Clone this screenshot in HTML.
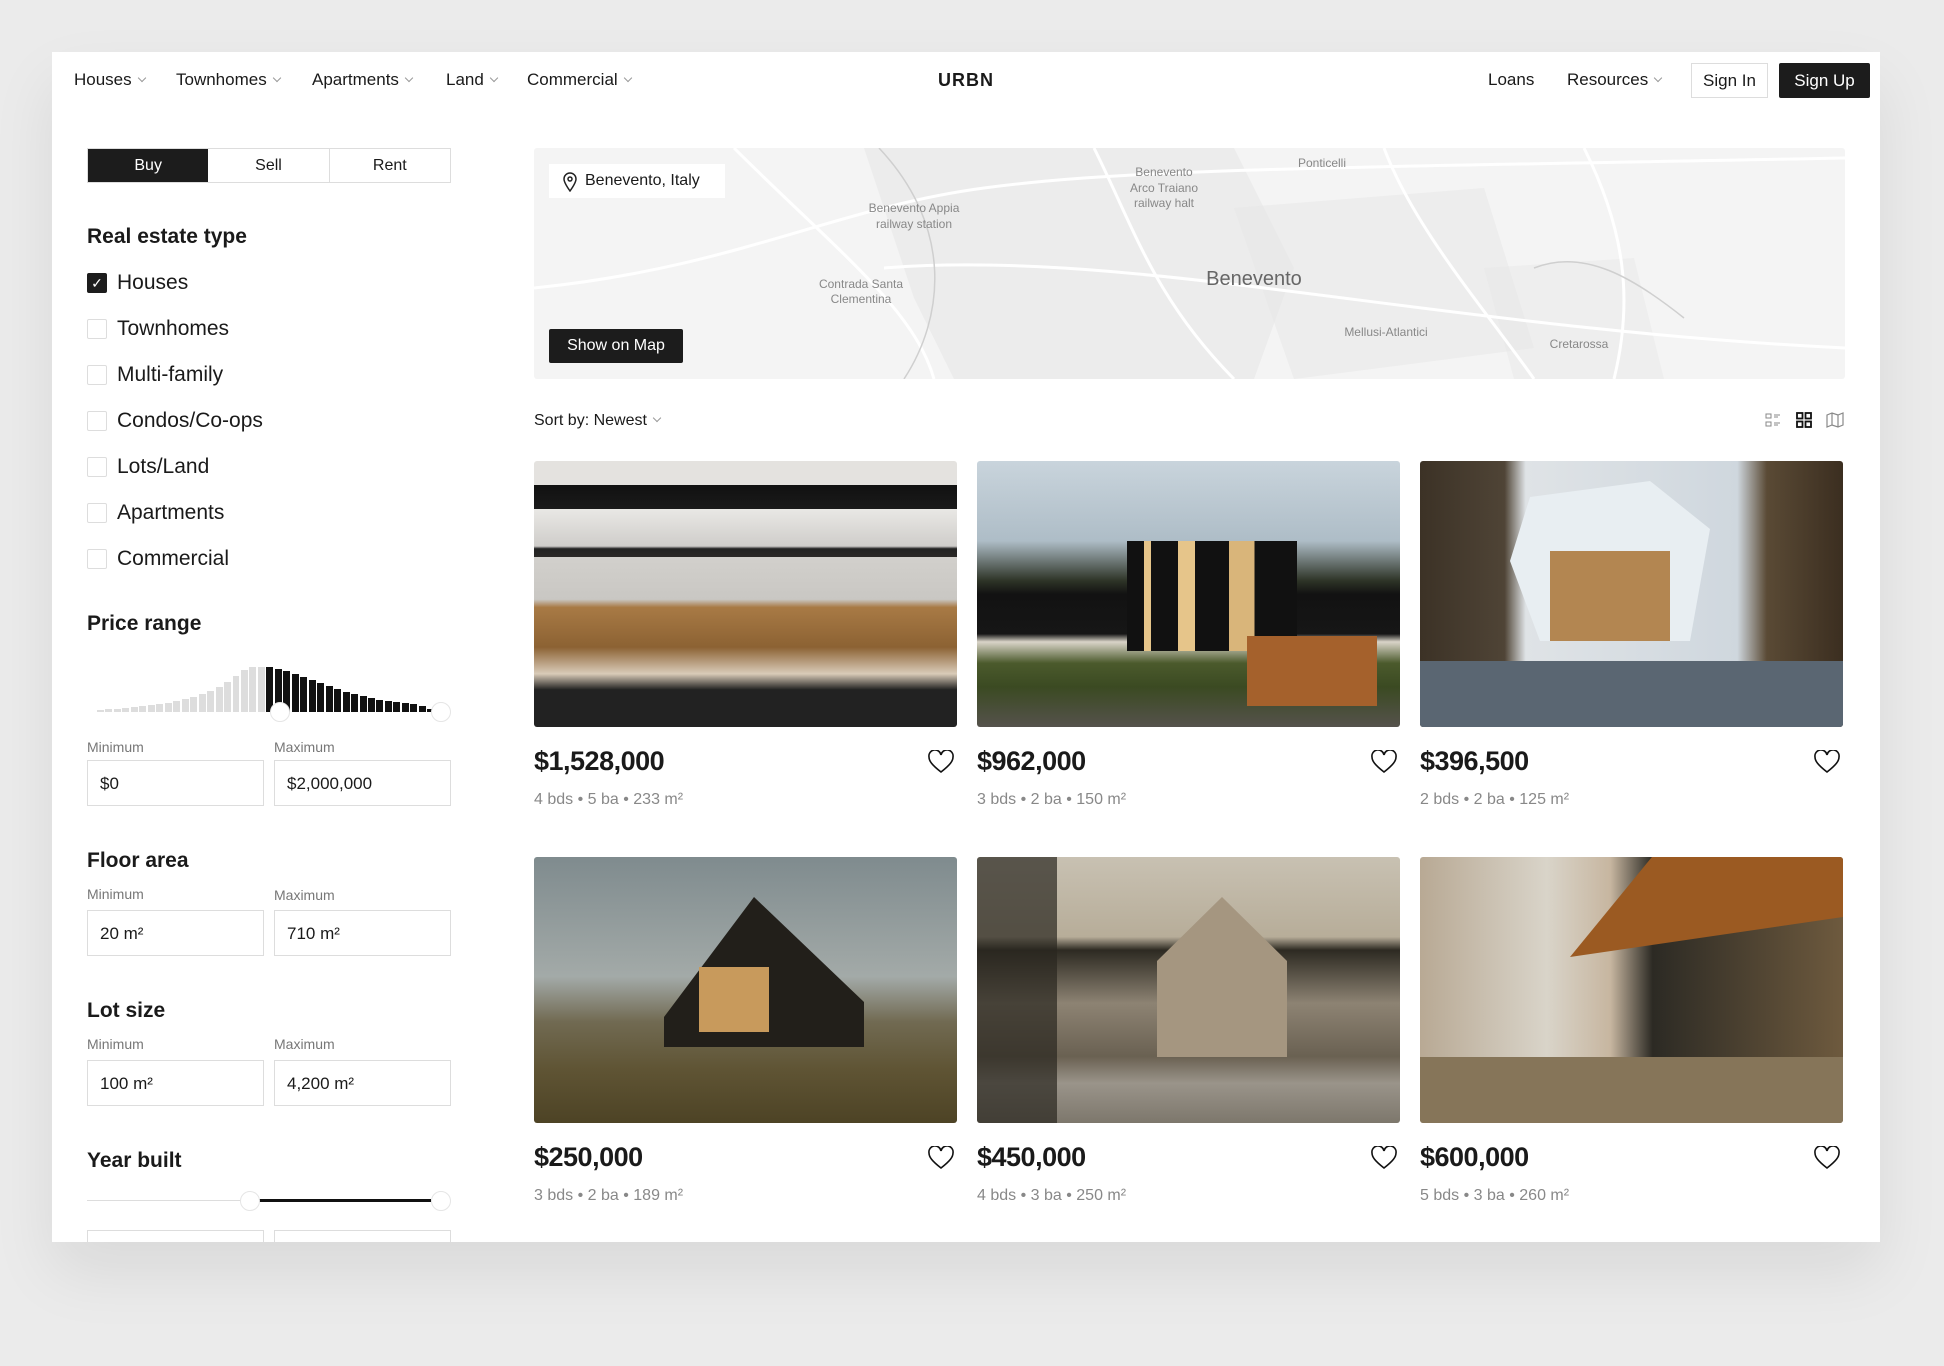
<!DOCTYPE html>
<html><head><meta charset="utf-8"><style>
*{box-sizing:border-box;margin:0;padding:0}
body{width:1944px;height:1366px;background:#ebebeb;font-family:"Liberation Sans",sans-serif;color:#1a1a1a;position:relative;overflow:hidden}
.card{position:absolute;left:52px;top:52px;width:1828px;height:1190px;background:#fff;box-shadow:0 30px 60px rgba(0,0,0,.08);overflow:hidden}
.a{position:absolute;white-space:nowrap}
.nav{font-size:17px;top:18px}
.chev{display:inline-block;width:6px;height:6px;border-right:1px solid #999;border-bottom:1px solid #999;transform:rotate(45deg);margin-left:7px;position:relative;top:-4px}
.h{font-size:21px;font-weight:bold}
.cb{position:absolute;left:87px;width:20px;height:20px;border:1px solid #ddd;border-radius:2px}
.cl{font-size:21px;left:117px}
.lab{font-size:14px;color:#777}
.inp{position:absolute;height:46px;border:1px solid #ddd;font-size:17px;padding:13px 12px;width:177px}
.img{position:absolute;width:423px;height:266px;border-radius:3px;overflow:hidden}
.price{font-size:27px;font-weight:bold;letter-spacing:-.5px}
.det{font-size:16px;color:#888}
.heart{position:absolute;width:26px;height:24px}
</style></head><body>
<div class="card">
 <div class="a nav" style="left:22px">Houses<span class="chev"></span></div>
 <div class="a nav" style="left:124px">Townhomes<span class="chev"></span></div>
 <div class="a nav" style="left:260px">Apartments<span class="chev"></span></div>
 <div class="a nav" style="left:394px">Land<span class="chev"></span></div>
 <div class="a nav" style="left:475px">Commercial<span class="chev"></span></div>
 <div class="a" style="left:886px;top:18px;font-size:18px;font-weight:bold;letter-spacing:1px">URBN</div>
 <div class="a nav" style="left:1436px">Loans</div>
 <div class="a nav" style="left:1515px">Resources<span class="chev"></span></div>
 <div class="a" style="left:1639px;top:11px;width:77px;height:35px;border:1px solid #ddd;font-size:17px;text-align:center;line-height:33px">Sign In</div>
 <div class="a" style="left:1727px;top:11px;width:91px;height:35px;background:#1c1c1c;color:#fff;border-radius:2px;font-size:17px;text-align:center;line-height:35px">Sign Up</div>

 <div class="a" style="left:35px;top:96px;width:364px;height:35px;border:1px solid #ddd;display:flex;font-size:16px">
  <div style="flex:1;background:#1c1c1c;color:#fff;text-align:center;line-height:33px">Buy</div>
  <div style="flex:1;text-align:center;line-height:33px;border-right:1px solid #ddd">Sell</div>
  <div style="flex:1;text-align:center;line-height:33px">Rent</div>
 </div>
 <div class="a h" style="left:35px;top:173px">Real estate type</div>
 <div class="cb" style="left:35px;top:221px;background:#1c1c1c;border-color:#1c1c1c;color:#fff;font-size:14px;text-align:center;line-height:18px">✓</div>
 <div class="a cl" style="left:65px;top:219px">Houses</div>
 <div class="cb" style="left:35px;top:267px"></div><div class="a cl" style="left:65px;top:265px">Townhomes</div>
 <div class="cb" style="left:35px;top:313px"></div><div class="a cl" style="left:65px;top:311px">Multi-family</div>
 <div class="cb" style="left:35px;top:359px"></div><div class="a cl" style="left:65px;top:357px">Condos/Co-ops</div>
 <div class="cb" style="left:35px;top:405px"></div><div class="a cl" style="left:65px;top:403px">Lots/Land</div>
 <div class="cb" style="left:35px;top:451px"></div><div class="a cl" style="left:65px;top:449px">Apartments</div>
 <div class="cb" style="left:35px;top:497px"></div><div class="a cl" style="left:65px;top:495px">Commercial</div>

 <div class="a h" style="left:35px;top:560px">Price range</div>
 <div class="a" style="left:45px;top:612px;width:337px;height:48px;display:flex;align-items:flex-end;gap:1.5px">
  <div style="flex:1;height:2px;background:#ddd"></div><div style="flex:1;height:3px;background:#ddd"></div><div style="flex:1;height:3px;background:#ddd"></div><div style="flex:1;height:4px;background:#ddd"></div><div style="flex:1;height:5px;background:#ddd"></div><div style="flex:1;height:6px;background:#ddd"></div><div style="flex:1;height:7px;background:#ddd"></div><div style="flex:1;height:8px;background:#ddd"></div><div style="flex:1;height:9px;background:#ddd"></div><div style="flex:1;height:11px;background:#ddd"></div><div style="flex:1;height:13px;background:#ddd"></div><div style="flex:1;height:15px;background:#ddd"></div><div style="flex:1;height:18px;background:#ddd"></div><div style="flex:1;height:21px;background:#ddd"></div><div style="flex:1;height:25px;background:#ddd"></div><div style="flex:1;height:30px;background:#ddd"></div><div style="flex:1;height:36px;background:#ddd"></div><div style="flex:1;height:42px;background:#ddd"></div><div style="flex:1;height:45px;background:#ddd"></div><div style="flex:1;height:45px;background:#ddd"></div>
  <div style="flex:1;height:45px;background:#111"></div><div style="flex:1;height:43px;background:#111"></div><div style="flex:1;height:41px;background:#111"></div><div style="flex:1;height:38px;background:#111"></div><div style="flex:1;height:35px;background:#111"></div><div style="flex:1;height:32px;background:#111"></div><div style="flex:1;height:29px;background:#111"></div><div style="flex:1;height:26px;background:#111"></div><div style="flex:1;height:23px;background:#111"></div><div style="flex:1;height:20px;background:#111"></div><div style="flex:1;height:18px;background:#111"></div><div style="flex:1;height:16px;background:#111"></div><div style="flex:1;height:14px;background:#111"></div><div style="flex:1;height:12px;background:#111"></div><div style="flex:1;height:11px;background:#111"></div><div style="flex:1;height:10px;background:#111"></div><div style="flex:1;height:9px;background:#111"></div><div style="flex:1;height:8px;background:#111"></div><div style="flex:1;height:6px;background:#111"></div><div style="flex:1;height:3px;background:#111"></div>
 </div>
 <div class="a" style="left:218px;top:650px;width:20px;height:20px;border-radius:50%;background:#fff;border:1px solid #e5e5e5"></div>
 <div class="a" style="left:379px;top:650px;width:20px;height:20px;border-radius:50%;background:#fff;border:1px solid #e5e5e5"></div>
 <div class="a lab" style="left:35px;top:687px">Minimum</div><div class="a lab" style="left:222px;top:687px">Maximum</div>
 <div class="inp" style="left:35px;top:708px">$0</div><div class="inp" style="left:222px;top:708px">$2,000,000</div>

 <div class="a h" style="left:35px;top:797px">Floor area</div>
 <div class="a lab" style="left:35px;top:834px">Minimum</div><div class="a lab" style="left:222px;top:835px">Maximum</div>
 <div class="inp" style="left:35px;top:858px">20 m²</div><div class="inp" style="left:222px;top:858px">710 m²</div>

 <div class="a h" style="left:35px;top:947px">Lot size</div>
 <div class="a lab" style="left:35px;top:984px">Minimum</div><div class="a lab" style="left:222px;top:984px">Maximum</div>
 <div class="inp" style="left:35px;top:1008px">100 m²</div><div class="inp" style="left:222px;top:1008px">4,200 m²</div>

 <div class="a h" style="left:35px;top:1097px">Year built</div>
 <div class="a" style="left:35px;top:1148px;width:160px;height:1px;background:#ddd"></div>
 <div class="a" style="left:207px;top:1147px;width:172px;height:3px;background:#111"></div>
 <div class="a" style="left:188px;top:1139px;width:20px;height:20px;border-radius:50%;background:#fff;border:1px solid #e5e5e5"></div>
 <div class="a" style="left:379px;top:1139px;width:20px;height:20px;border-radius:50%;background:#fff;border:1px solid #e5e5e5"></div>
 <div class="inp" style="left:35px;top:1178px"></div><div class="inp" style="left:222px;top:1178px"></div>

 <!-- map -->
 <div class="a" style="left:482px;top:96px;width:1311px;height:231px;background:#f4f4f4;border-radius:3px;overflow:hidden">
  <svg width="1311" height="231" style="position:absolute;left:0;top:0">
   <g fill="#e6e6e6"><path d="M330 0 L700 0 L760 120 L720 231 L420 231 L380 150 Z" opacity=".6"/><path d="M700 60 L950 40 L1000 200 L760 231 Z" opacity=".5"/><path d="M950 120 L1100 110 L1130 231 L980 231Z" opacity=".4"/></g>
   <g fill="none" stroke="#fff" stroke-width="3"><path d="M0 140 C200 120 300 60 450 40 S800 20 1311 10"/><path d="M200 0 C300 100 380 160 400 231"/><path d="M560 0 C600 80 620 150 700 231"/><path d="M350 120 C600 100 900 180 1311 200"/><path d="M850 0 C880 80 950 160 1000 231"/><path d="M1050 0 C1090 80 1100 150 1080 231"/></g>
   <g fill="none" stroke="#cfcfcf" stroke-width="1.5"><path d="M345 0 C420 80 410 170 370 231"/><path d="M1000 120 C1050 100 1100 130 1150 170"/></g>
   <g font-family="Liberation Sans" font-size="12" fill="#888" text-anchor="middle"><text x="380" y="64">Benevento Appia</text><text x="380" y="80">railway station</text><text x="327" y="140">Contrada Santa</text><text x="327" y="155">Clementina</text><text x="630" y="28">Benevento</text><text x="630" y="44">Arco Traiano</text><text x="630" y="59">railway halt</text><text x="788" y="19">Ponticelli</text><text x="720" y="137" font-size="20" fill="#666">Benevento</text><text x="852" y="188">Mellusi-Atlantici</text><text x="1045" y="200">Cretarossa</text></g>
  </svg>
  <div class="a" style="left:15px;top:16px;height:34px;width:176px;background:#fff;font-size:16px;line-height:34px;padding-left:36px">Benevento, Italy
   <svg width="16" height="20" style="position:absolute;left:13px;top:8px" viewBox="0 0 16 20"><path d="M8 19 C3 12 2 9 2 7 A6 6 0 0 1 14 7 C14 9 13 12 8 19Z" fill="none" stroke="#222" stroke-width="1.5"/><circle cx="8" cy="7" r="2" fill="none" stroke="#222" stroke-width="1.5"/></svg></div>
  <div class="a" style="left:15px;top:181px;height:34px;width:134px;background:#1c1c1c;color:#fff;font-size:16px;line-height:34px;text-align:center;border-radius:2px">Show on Map</div>
 </div>
 <div class="a" style="left:482px;top:360px;font-size:16px">Sort by: Newest<span class="chev"></span></div>
 <svg class="a" style="left:1713px;top:360px" width="16" height="16"><g fill="none" stroke="#888"><rect x="1" y="2" width="5" height="4"/><rect x="1" y="10" width="5" height="4"/><path d="M9 3h6M9 5h4M9 11h6M9 13h4"/></g></svg>
 <svg class="a" style="left:1744px;top:360px" width="16" height="16"><g fill="none" stroke="#111" stroke-width="1.8"><rect x="1" y="1" width="5.5" height="5.5"/><rect x="9.5" y="1" width="5.5" height="5.5"/><rect x="1" y="9.5" width="5.5" height="5.5"/><rect x="9.5" y="9.5" width="5.5" height="5.5"/></g></svg>
 <svg class="a" style="left:1774px;top:359px" width="18" height="18"><path d="M1 4l5-2 6 2 5-2v12l-5 2-6-2-5 2z M6 2v12 M12 4v12" fill="none" stroke="#888" stroke-width="1.2"/></svg>

 <!-- cards row1 -->
 <div class="img" style="left:482px;top:409px;background:linear-gradient(180deg,#e4e2df 0%,#e4e2df 9%,#111 9%,#1a1a1a 18%,#e9e8e5 18%,#cfcdca 32%,#222 33%,#2a2826 36%,#d2d0cc 36%,#c9c7c3 52%,#a87a45 55%,#8c6233 70%,#d9cbb8 80%,#222 86%,#222 100%)"></div>
 <div class="img" style="left:925px;top:409px;background:linear-gradient(180deg,#c9d4dc 0%,#aebdc7 30%,#2e3427 45%,#121212 50%,#161616 65%,#d9d4c8 68%,#4b5a2c 76%,#3b4a22 85%,#55524c 100%)"><div style="position:absolute;left:150px;top:80px;width:170px;height:110px;background:linear-gradient(90deg,#111 0 10%,#e6c58a 10% 14%,#111 14% 30%,#e6c58a 30% 40%,#111 40% 60%,#d9b57a 60% 75%,#111 75%)"></div><div style="position:absolute;left:270px;top:175px;width:130px;height:70px;background:#a5612c"></div></div>
 <div class="img" style="left:1368px;top:409px;background:linear-gradient(90deg,#3c3226 0%,#4f4436 20%,#dfe3e6 25%,#cfd7de 75%,#5a4a35 82%,#3b2e20 100%)"><div style="position:absolute;left:90px;top:20px;width:200px;height:160px;background:#e8eef2;clip-path:polygon(10% 10%,70% 0,100% 30%,90% 100%,15% 100%,0 50%)"></div><div style="position:absolute;left:130px;top:90px;width:120px;height:90px;background:#b38651"></div><div style="position:absolute;left:0;top:200px;width:423px;height:66px;background:#5a6672"></div></div>
 <div class="a price" style="left:482px;top:694px">$1,528,000</div><div class="a det" style="left:482px;top:739px">4 bds • 5 ba • 233 m²</div>
 <div class="a price" style="left:925px;top:694px">$962,000</div><div class="a det" style="left:925px;top:739px">3 bds • 2 ba • 150 m²</div>
 <div class="a price" style="left:1368px;top:694px">$396,500</div><div class="a det" style="left:1368px;top:739px">2 bds • 2 ba • 125 m²</div>

 <!-- cards row2 -->
 <div class="img" style="left:482px;top:805px;background:linear-gradient(180deg,#7f8b8e 0%,#a3aaa8 45%,#716a52 62%,#5f5434 80%,#4d4325 100%)"><div style="position:absolute;left:130px;top:40px;width:200px;height:150px;background:#221f1a;clip-path:polygon(45% 0,100% 70%,100% 100%,0 100%,0 80%)"></div><div style="position:absolute;left:165px;top:110px;width:70px;height:65px;background:#c89a5c"></div></div>
 <div class="img" style="left:925px;top:805px;background:linear-gradient(180deg,#c8c1b2 0%,#b7ad99 30%,#2d2a22 35%,#8d8373 55%,#6a6152 75%,#9a948a 85%,#7d776c 100%)"><div style="position:absolute;left:180px;top:40px;width:130px;height:160px;background:#a59680;clip-path:polygon(50% 0,100% 40%,100% 100%,0 100%,0 40%)"></div><div style="position:absolute;left:0;top:0;width:80px;height:266px;background:#2a2620;opacity:.7"></div></div>
 <div class="img" style="left:1368px;top:805px;background:linear-gradient(90deg,#b8a994 0%,#d9d4c9 30%,#c7b6a0 45%,#2c2a24 55%,#6e5a3e 100%)"><div style="position:absolute;left:150px;top:0;width:273px;height:100px;background:#9b5a22;clip-path:polygon(30% 0,100% 0,100% 60%,0 100%)"></div><div style="position:absolute;left:0;top:200px;width:423px;height:66px;background:#867559"></div></div>
 <div class="a price" style="left:482px;top:1090px">$250,000</div><div class="a det" style="left:482px;top:1135px">3 bds • 2 ba • 189 m²</div>
 <div class="a price" style="left:925px;top:1090px">$450,000</div><div class="a det" style="left:925px;top:1135px">4 bds • 3 ba • 250 m²</div>
 <div class="a price" style="left:1368px;top:1090px">$600,000</div><div class="a det" style="left:1368px;top:1135px">5 bds • 3 ba • 260 m²</div>

 <svg class="heart" style="left:876px;top:698px" viewBox="0 0 26 24"><path d="M13 22 C4 15 1 11 1 7 A5.8 5.8 0 0 1 13 5 A5.8 5.8 0 0 1 25 7 C25 11 22 15 13 22Z" fill="none" stroke="#111" stroke-width="1.6"/></svg>
 <svg class="heart" style="left:1319px;top:698px" viewBox="0 0 26 24"><path d="M13 22 C4 15 1 11 1 7 A5.8 5.8 0 0 1 13 5 A5.8 5.8 0 0 1 25 7 C25 11 22 15 13 22Z" fill="none" stroke="#111" stroke-width="1.6"/></svg>
 <svg class="heart" style="left:1762px;top:698px" viewBox="0 0 26 24"><path d="M13 22 C4 15 1 11 1 7 A5.8 5.8 0 0 1 13 5 A5.8 5.8 0 0 1 25 7 C25 11 22 15 13 22Z" fill="none" stroke="#111" stroke-width="1.6"/></svg>
 <svg class="heart" style="left:876px;top:1094px" viewBox="0 0 26 24"><path d="M13 22 C4 15 1 11 1 7 A5.8 5.8 0 0 1 13 5 A5.8 5.8 0 0 1 25 7 C25 11 22 15 13 22Z" fill="none" stroke="#111" stroke-width="1.6"/></svg>
 <svg class="heart" style="left:1319px;top:1094px" viewBox="0 0 26 24"><path d="M13 22 C4 15 1 11 1 7 A5.8 5.8 0 0 1 13 5 A5.8 5.8 0 0 1 25 7 C25 11 22 15 13 22Z" fill="none" stroke="#111" stroke-width="1.6"/></svg>
 <svg class="heart" style="left:1762px;top:1094px" viewBox="0 0 26 24"><path d="M13 22 C4 15 1 11 1 7 A5.8 5.8 0 0 1 13 5 A5.8 5.8 0 0 1 25 7 C25 11 22 15 13 22Z" fill="none" stroke="#111" stroke-width="1.6"/></svg>
</div>
</body></html>
